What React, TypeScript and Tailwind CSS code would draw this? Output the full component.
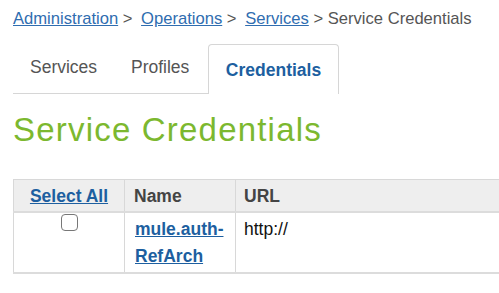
const App = () => {
  return (
    <div className="w-[499px] h-[293px] overflow-hidden bg-white font-['Liberation_Sans',Arial,sans-serif] pl-[13px]">
      <div className="pt-[9px] text-[16.6px] leading-[20px] text-[#555] whitespace-nowrap">
        <a className="text-[#2f6db0] underline">Administration</a>
        <span> &gt; </span>
        <a className="text-[#2f6db0] underline ml-1">Operations</a>
        <span> &gt; </span>
        <a className="text-[#2f6db0] underline ml-1">Services</a>
        <span> &gt; Service Credentials</span>
      </div>

      <div className="mt-[15px] flex items-end h-[50px] text-[17.5px]">
        <div className="flex items-end border-b border-[#d6d6d6] h-full w-[195px]">
          <div className="pl-[17px] w-[118px] pb-[13px] text-[#555]">Services</div>
          <div className="pb-[13px] text-[#555]">Profiles</div>
        </div>
        <div className="h-full w-[131px] border border-b-0 border-[#d6d6d6] rounded-t-[4px] flex justify-center pt-[12px] font-bold text-[#1d5fa0]">
          Credentials
        </div>
      </div>

      <h1 className="mt-[20px] text-[33px] leading-[32px] tracking-[1.2px] text-[#7cb82f]">
        Service Credentials
      </h1>

      <table className="mt-[33px] w-[520px] border-collapse text-[17.5px] border border-[#d8d8d8]">
        <thead>
          <tr className="bg-[#eeeeee] h-[32px] border-b-2 border-[#dcdcdc]">
            <th className="w-[111px] border-r border-[#d8d8d8] text-center font-bold pt-[2px]">
              <a className="text-[#1d5fa0] underline">Select All</a>
            </th>
            <th className="w-[111px] border-r border-[#d8d8d8] text-left pl-[9px] pt-[2px] font-bold text-[#444]">
              Name
            </th>
            <th className="text-left pl-[8px] pt-[2px] font-bold text-[#444]">URL</th>
          </tr>
        </thead>
        <tbody>
          <tr className="h-[61px] border-b-2 border-[#dcdcdc] align-top">
            <td className="border-r border-[#d8d8d8] text-center">
              <div className="mx-auto mt-[1px] w-[17px] h-[17px] border-[1.5px] border-[#777] rounded-[4px] bg-white" />
            </td>
            <td className="border-r border-[#d8d8d8] pl-[10px] pt-[3px] leading-[27px] font-bold">
              <a className="text-[#1d5fa0] underline">
                mule.auth-
                <br />
                RefArch
              </a>
            </td>
            <td className="pl-[8px] pt-[3px] leading-[27px] text-[#111]">http://</td>
          </tr>
        </tbody>
      </table>
    </div>
  );
};

export default App;
